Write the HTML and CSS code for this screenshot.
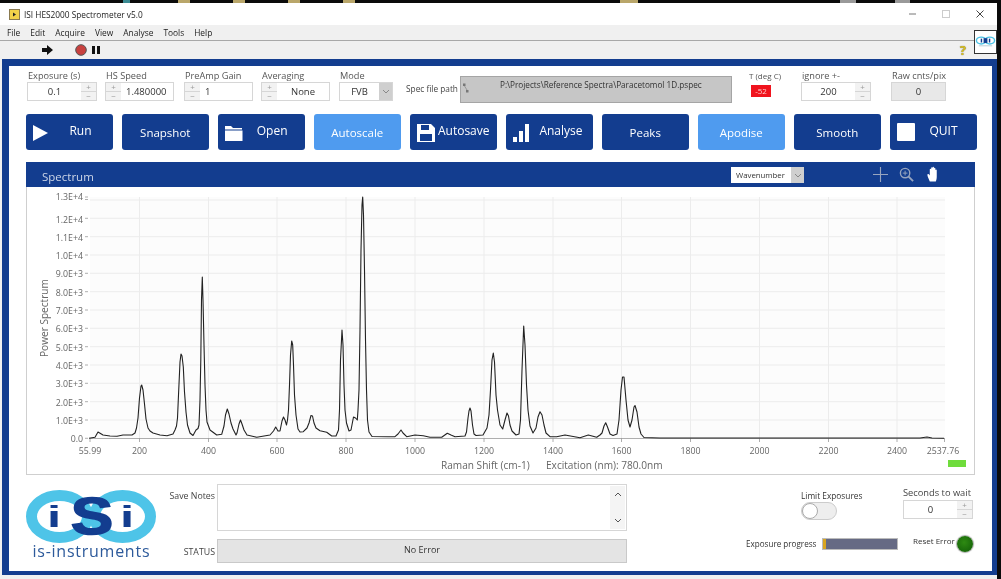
FILE: index.html
```html
<!DOCTYPE html>
<html lang="en">
<head>
<meta charset="utf-8">
<title>ISI HES2000 Spectrometer v5.0</title>
<link rel="stylesheet" href="styles.css">
</head>
<body>
<div class="desktop"></div>
<div class="window">
  <header class="titlebar">
    <svg class="appicon" viewBox="0 0 11 11"><rect x="0.5" y="0.5" width="10" height="10" fill="#f2d24a" stroke="#8a7a50"/><path d="M4 3.5 7 5.5 4 7.5Z" fill="#222"/></svg>
    <span class="apptitle">ISI HES2000 Spectrometer v5.0</span>
    <span class="winbtns">
      <svg viewBox="0 0 10 10"><path d="M2 5H9" stroke="#777"/></svg>
      <svg viewBox="0 0 10 10"><rect x="1.5" y="1.5" width="7" height="7" fill="none" stroke="#ccc"/></svg>
      <svg viewBox="0 0 10 10"><path d="M1.5 1.5 8.5 8.5M8.5 1.5 1.5 8.5" stroke="#444"/></svg>
    </span>
  </header>
  <div class="barwrap">
    <div class="bars">
      <nav class="menubar"><span>File</span><span>Edit</span><span>Acquire</span><span>View</span><span>Analyse</span><span>Tools</span><span>Help</span></nav>
      <div class="toolbar">
        <svg class="t-run" viewBox="0 0 12 10"><path d="M0 3H5V0L11 5 5 10V7H0Z" fill="#111"/></svg>
        <svg class="t-stop" viewBox="0 0 12 12"><circle cx="6" cy="6" r="5.3" fill="#c8413f" stroke="#555"/></svg>
        <svg class="t-pause" viewBox="0 0 8 8"><rect x="0" width="3" height="8" fill="#111"/><rect x="5" width="3" height="8" fill="#111"/></svg>
        <span class="help">?</span>
      </div>
    </div>
    <div class="tile">
      <svg viewBox="0 0 22 22"><ellipse cx="6.500" cy="9.500" rx="5" ry="3.600" fill="none" stroke="#4cc3e6" stroke-width="1.500"/><ellipse cx="15.500" cy="9.500" rx="5" ry="3.600" fill="none" stroke="#4cc3e6" stroke-width="1.500"/><rect x="6" y="7.500" width="1.500" height="4" fill="#133d8f"/><rect x="9" y="7" width="4" height="5" fill="#133d8f"/><rect x="14.500" y="7.500" width="1.500" height="4" fill="#133d8f"/><path d="M4 15H18" stroke="#8ab" stroke-width=".6"/></svg>
    </div>
  </div>

  <div class="frame">
    <main class="panel">
      <section class="controls">
        <div class="ctl c-exp"><label>Exposure (s)</label><div class="num"><span class="val">0.1</span><span class="spin"><i>+</i><i>−</i></span></div></div>
        <div class="ctl c-hs"><label>HS Speed</label><div class="num"><span class="spin"><i>+</i><i>−</i></span><span class="val left">1.480000</span></div></div>
        <div class="ctl c-pre"><label>PreAmp Gain</label><div class="num"><span class="spin"><i>+</i><i>−</i></span><span class="val left">1</span></div></div>
        <div class="ctl c-avg"><label>Averaging</label><div class="num"><span class="spin"><i>+</i><i>−</i></span><span class="val">None</span></div></div>
        <div class="ctl c-mode"><label>Mode</label><div class="num"><span class="val">FVB</span><span class="drop"><svg viewBox="0 0 8 5"><path d="M1 1 4 4 7 1" fill="none" stroke="#888"/></svg></span></div></div>
        <div class="path-lab">Spec file path</div>
        <div class="pathbox">
          <svg class="pathicon" viewBox="0 0 6 10"><rect x="0" y="0" width="2.500" height="2.500" fill="#777"/><rect x="3" y="6.500" width="2.500" height="2.500" fill="#777"/><path d="M1.500 2.500 4 6.500" stroke="#777" stroke-width=".6"/></svg>
          <span>P:\Projects\Reference Spectra\Paracetomol 1D.pspec</span>
        </div>
        <div class="temp"><label>T (deg C)</label><div class="redbox">-52</div></div>
        <div class="ctl c-ign"><label>ignore +-</label><div class="num"><span class="val">200</span><span class="spin"><i>+</i><i>−</i></span></div></div>
        <div class="ctl c-raw"><label>Raw cnts/pix</label><div class="num grey"><span class="val">0</span></div></div>
      </section>

      <section class="buttons">
        <button class="btn icon-l b-run"><svg class="ic" viewBox="0 0 15 16"><path d="M0 0 15 8 0 16Z" fill="#fff"/></svg><span>Run</span></button>
        <button class="btn"><span>Snapshot</span></button>
        <button class="btn icon-l b-open"><svg class="ic ic-open" viewBox="0 0 18 16"><path d="M0 1H6L8 3H17V4.500H0ZM0 5.500H17.500V16H0Z" fill="#fff"/></svg><span>Open</span></button>
        <button class="btn light"><span>Autoscale</span></button>
        <button class="btn icon-l b-save"><svg class="ic ic-big" viewBox="0 0 18 18"><path fill-rule="evenodd" d="M0 0H14L18 4V18H0ZM4 1V6H12V1ZM3 10V17H15V10Z" fill="#fff"/></svg><span>Autosave</span></button>
        <button class="btn icon-l b-ana"><svg class="ic ic-bars" viewBox="0 0 16 18"><rect x="0" y="13" width="4" height="5" fill="#fff"/><rect x="6" y="7" width="4" height="11" fill="#fff"/><rect x="12" y="0" width="4" height="18" fill="#fff"/></svg><span>Analyse</span></button>
        <button class="btn"><span>Peaks</span></button>
        <button class="btn light"><span>Apodise</span></button>
        <button class="btn"><span>Smooth</span></button>
        <button class="btn icon-l b-quit"><span class="quitbox"></span><span>QUIT</span></button>
      </section>

      <section class="chart">
        <div class="charthead">
          <span class="charttitle">Spectrum</span>
          <div class="select"><span>Wavenumber</span><span class="drop"><svg viewBox="0 0 8 5"><path d="M1 1 4 4 7 1" fill="none" stroke="#888"/></svg></span></div>
          <div class="tools">
            <svg class="tool-cross" viewBox="0 0 16 16"><path d="M8 0V16M0 8H16" stroke="#98a5bf" stroke-width="1.200"/></svg>
            <svg class="tool-zoom" viewBox="0 0 16 16"><circle cx="6.500" cy="6.500" r="5" fill="none" stroke="#98a5bf" stroke-width="1.500"/><path d="M10 10 15 15" stroke="#98a5bf" stroke-width="2"/><path d="M6.500 4V9M4 6.500H9" stroke="#98a5bf"/></svg>
            <svg class="tool-hand" viewBox="0 0 14 16"><path d="M3 16C2 13 0 10 .5 8.500 1 7.500 2 8 3 9.500V3C3 2 4.300 2 4.500 3V7 1.500C4.500.5 6 .5 6 1.500V7 1C6 0 7.500 0 7.500 1V7 2C7.500 1 9 1 9 2V7.500 4C9 3 10.500 3 10.500 4V11C10.500 13 10 15 9.500 16Z" fill="#fff"/></svg>
          </div>
        </div>
        <svg class="plot" viewBox="26 187 949 288" xmlns="http://www.w3.org/2000/svg">
          <rect x="90" y="197" width="855" height="241" fill="#fcfcfc"/>
          <g class="grid">
            <path d="M90 200H945M90 218.300H945M90 236.700H945M90 255H945M90 273.300H945M90 291.700H945M90 310H945M90 328.300H945M90 346.700H945M90 365H945M90 383.300H945M90 401.700H945M90 420H945"/>
            <path d="M139.500 197V438M208.500 197V438M277 197V438M346 197V438M415 197V438M484 197V438M553 197V438M621.500 197V438M690.500 197V438M759.500 197V438M828.500 197V438M897 197V438"/>
          </g>
          <g class="axis">
            <path d="M85 197H88M85 199.500H88M85 218.300H88M85 236.700H88M85 255H88M85 273.300H88M85 291.700H88M85 310H88M85 328.300H88M85 346.700H88M85 365H88M85 383.300H88M85 401.700H88M85 420H88M85 438.300H88"/>
            <path d="M90 438.500H945M90 438V442M139.500 438V442M208.500 438V442M277 438V442M346 438V442M415 438V442M484 438V442M553 438V442M621.500 438V442M690.500 438V442M759.500 438V442M828.500 438V442M897 438V442M944.500 438V442"/>
          </g>
          <polyline class="trace" points="89,438.300 95,437.300 98,432 103,435 110,436 117,436.300 123,435 132,435 135,433 136.500,428 138,418 139.500,398 141,386 141.700,385 143,390 144.500,404 146,419 148,428 150,431 153,433 160,435 167,435.700 173,434 175,430 176.500,426 177.500,418 178.500,395 180,362 181,354 182,356 183.300,367 184.500,392 186,412 187.500,425 190,433 193,435.500 196,430 198,428.500 199,425 200,400 200.800,360 201.500,300 202.300,277 203,300 204,345 205,385 206,410 207,422 210,430 216.700,435 221.700,434.300 224,426 225.500,415 227.300,409 229,414 231,423 233,429 236,435 237,433 239,424 240.500,420 242,424 244,430 247,435 256.700,437.300 270,435 273.500,431 275.700,427 278,431 280,431 282,421 283.500,417 285,420 286.500,425 287.500,420 288.500,410 289.500,385 290.500,355 291.700,341 292.700,345 293.500,365 294.500,395 296,415 298,429 300,432 303.300,431.700 307,428 309,423 311,415.500 312.500,416 314,423 316,428 320,430.700 326.700,432.300 331.700,436 336,436 338.500,430 339.500,410 340.500,360 342,330 343,345 344,385 345,410 346.500,423 349,431 351,430 353.500,417 355.500,418 357.300,420 358,410 359,390 360,330 361,250 362,205 362.700,197 363.500,215 364.500,270 365.500,340 366.500,390 367.500,420 369,432 372,436.500 388.300,436.700 395,436.700 398,434 401,430 403,433 406.700,436.700 415,435 423.300,435.700 430,437.300 441.700,437.300 447.300,433.300 451,435 455,436.700 465,436 466.500,432 468,418 469,411 470,408 471,411 472.500,425 474,434 476,435.500 483,435 487,428 489,415 490.500,390 492,360 493.300,353 494.500,362 496,395 497.500,410 500,425 502.700,429 505,420 507,413 508.500,416 510,425 512,431 516,435 519,434 520.500,420 522,370 523.700,326 525,345 526.500,385 528,410 530,426 533,433 536,428 538,417 540,411.700 542,415 544,425 546,433 550,436.700 556.700,436.700 565,435 580,437.700 588.300,435 596.700,437.300 600,435 602,433 604,426 605.700,422.700 607.500,427 610,434 613,435.500 617,434 619,420 621,390 622.500,377 624,377 626,400 628,420 630,427 632,420 634,407 635,405.500 637,412 639,427 641,434 644,437.500 660,438 700,438 800,438 920,438 927,437 932,438 944,438.300"/>
          <g class="ylab">
            <text x="83" y="200">1.3E+4</text><text x="83" y="222.500">1.2E+4</text><text x="83" y="240.800">1.1E+4</text><text x="83" y="259">1.0E+4</text><text x="83" y="277.300">9.0E+3</text><text x="83" y="295.700">8.0E+3</text><text x="83" y="314">7.0E+3</text><text x="83" y="332.300">6.0E+3</text><text x="83" y="350.700">5.0E+3</text><text x="83" y="369">4.0E+3</text><text x="83" y="387.300">3.0E+3</text><text x="83" y="405.700">2.0E+3</text><text x="83" y="424">1.0E+3</text><text x="83" y="442.300">0.0</text>
          </g>
          <g class="xlab">
            <text x="90" y="454">55.99</text><text x="139.500" y="454">200</text><text x="208.500" y="454">400</text><text x="277" y="454">600</text><text x="346" y="454">800</text><text x="415" y="454">1000</text><text x="484" y="454">1200</text><text x="553" y="454">1400</text><text x="621.500" y="454">1600</text><text x="690.500" y="454">1800</text><text x="759.500" y="454">2000</text><text x="828.500" y="454">2200</text><text x="897" y="454">2400</text><text x="943" y="454">2537.76</text>
          </g>
          <text class="axtitle" x="441" y="469">Raman Shift (cm-1)</text>
          <text class="axtitle" x="546" y="469">Excitation (nm): 780.0nm</text>
          <text class="axtitle" transform="rotate(-90 48 357)" x="48" y="357">Power Spectrum</text>
          <rect x="948" y="460" width="18" height="7" fill="#6fdc3c"/>
        </svg>
      </section>

      <section class="bottom">
        <svg class="logo" viewBox="0 0 130 72">
          <ellipse cx="33.500" cy="27.500" rx="28" ry="21" fill="none" stroke="#4ec4e8" stroke-width="11"/>
          <ellipse cx="96.500" cy="27.500" rx="28" ry="21" fill="none" stroke="#4ec4e8" stroke-width="11"/>
          <text class="logo-big" transform="translate(66 45) scale(1.250 1)">S</text>
          <text class="logo-i" transform="translate(28 38) scale(1.700 1)">i</text>
          <text class="logo-i" transform="translate(101 38) scale(1.700 1)">i</text>
          <text class="logo-name" x="65" y="68" textLength="117" lengthAdjust="spacing">is-instruments</text>
        </svg>
        <div class="notes">
          <div class="notes-row"><label class="side">Save Notes</label><div class="notebox"><span class="scroll"><svg viewBox="0 0 8 5"><path d="M1 4 4 1 7 4" fill="none" stroke="#555"/></svg><svg viewBox="0 0 8 5"><path d="M1 1 4 4 7 1" fill="none" stroke="#555"/></svg></span></div></div>
          <div class="status-row"><label class="side">STATUS</label><div class="statusbox">No Error</div></div>
        </div>
        <div class="right">
          <div class="right-top">
            <div class="limit"><span>Limit Exposures</span><div class="switch"><i></i></div></div>
            <div class="wait"><label>Seconds to wait</label><div class="num"><span class="val">0</span><span class="spin"><i>+</i><i>−</i></span></div></div>
          </div>
          <div class="right-low">
            <span class="prog-lab">Exposure progress</span>
            <div class="progress"><i></i></div>
            <span class="reset">Reset Error</span>
            <span class="led"></span>
          </div>
        </div>
      </section>
    </main>
  </div>
</div>
</body>
</html>
```
FILE: styles.css
```css
* { box-sizing: border-box; }
html, body { margin: 0; height: 100%; background: #0b0b0b; }
body { width: 1001px; height: 579px; overflow: hidden; font-family: "Open Sans", "Noto Sans", sans-serif; color: #333; }
.desktop { height: 3px; background: linear-gradient(90deg, #0b0b0b 0 123px, #3a8a92 123px 130px, #0b0b0b 130px 178px, #b9a66a 178px 190px, #0b0b0b 190px 233px, #b9a66a 233px 245px, #0b0b0b 245px 288px, #b9a66a 288px 300px, #0b0b0b 300px 343px, #b9a66a 343px 355px, #0b0b0b 355px 620px, #b9a66a 620px 638px, #0b0b0b 638px 840px, #999 840px 856px, #0b0b0b 856px 895px, #999 895px 910px, #0b0b0b 910px); }
.window { width: 997px; height: 576px; background: #f0f0f0; display: flex; flex-direction: column; filter: blur(.3px); }
.titlebar { height: 22px; background: #fff; display: flex; align-items: center; padding-left: 9px; flex: none; }
.appicon { width: 11px; height: 11px; }
.apptitle { font-size: 8.300px; margin-left: 4px; color: #222; }
.winbtns { margin-left: auto; display: flex; gap: 24px; padding-right: 12px; }
.winbtns svg { width: 10px; height: 10px; }
.barwrap { display: flex; height: 34px; flex: none; background: #f0f0f0; }
.bars { flex: 1; min-width: 0; }
.menubar { height: 16px; display: flex; gap: 10px; padding-left: 7px; align-items: center; font-size: 8.400px; color: #222; border-bottom: 1px solid #a8a8a8; }
.toolbar { height: 18px; display: flex; align-items: center; }
.t-run { width: 12px; height: 10px; margin-left: 42px; }
.t-stop { width: 12px; height: 12px; margin-left: 21px; }
.t-pause { width: 8px; height: 8px; margin-left: 5px; }
.help { margin-left: auto; margin-right: 8px; font-weight: 700; font-size: 13px; color: #d8c020; line-height: 1; text-shadow: 0 0 1px #444; }
.tile { width: 23px; height: 24px; margin-top: 5px; background: #fff; border: 1px solid #333; flex: none; }
.tile svg { width: 100%; height: 100%; display: block; }
.frame { flex: none; height: 516px; background: #133d8f; padding: 7px 5px 4px 7px; margin-left: 2px; width: 995px; }
.panel { width: 983px; height: 505px; background: #fff; padding: 4px 16px 0 17px; display: flex; flex-direction: column; }
.controls { height: 39px; display: flex; align-items: flex-start; flex: none; }
.ctl { display: flex; flex-direction: column; }
.ctl label, .temp label { font-size: 9.200px; color: #555; line-height: 12px; padding-left: 1px; white-space: nowrap; }
.num { height: 19px; border: 1px solid #d6d6d6; display: flex; align-items: stretch; font-size: 9.500px; color: #333; background: #fff; }
.num .val { flex: 1; display: flex; align-items: center; justify-content: center; }
.num .val.left { justify-content: flex-start; padding-left: 5px; }
.spin { width: 15px; display: flex; flex-direction: column; background: #f2f2f2; flex: none; }
.spin i { flex: 1; font-style: normal; font-size: 8px; line-height: 8px; color: #999; border: 0 solid #d6d6d6; display: flex; align-items: center; justify-content: center; }
.spin i:first-child { border-bottom-width: 1px; }
.c-exp { width: 70px; margin-left: 1px; }
.c-hs { width: 69px; margin-left: 8px; }
.c-pre { width: 69px; margin-left: 10px; }
.c-avg { width: 69px; margin-left: 8px; }
.c-mode { width: 54px; margin-left: 9px; }
.drop { width: 13px; flex: none; background: #cfcfcf; display: flex; align-items: center; justify-content: center; }
.drop svg { width: 8px; height: 5px; }
.path-lab { font-size: 8.300px; color: #444; margin: 13px 0 0 13px; width: 54px; white-space: nowrap; }
.pathbox { width: 272px; height: 27px; margin-top: 6px; background: #c6c6c6; border: 1px solid #a5a5a5; display: flex; font-size: 8.200px; color: #333; padding: 2px 0 0 2px; }
.pathicon { width: 6px; height: 11px; margin-top: 4px; flex: none; }
.pathbox span { margin-left: 31px; white-space: nowrap; }
.temp { margin-left: 17px; width: 42px; }
.temp label { font-size: 8px; display: block; padding: 0; }
.redbox { width: 20px; height: 12px; margin: 3px 0 0 2px; background: #f0141e; color: #fcc; font-size: 8px; line-height: 12px; text-align: center; }
.c-ign { width: 70px; margin-left: 10px; }
.c-raw { width: 55px; margin-left: 20px; }
.num.grey { background: #e8e8e8; }
.buttons { height: 36px; margin-top: 5px; flex: none; display: grid; grid-template-columns: repeat(10, 86.500px); column-gap: 9.500px; }
.btn { border: 0; border-radius: 3px; background: #133d8f; color: #fff; font: 500 11.500px "Open Sans", "Noto Sans", sans-serif; display: flex; align-items: center; justify-content: center; padding: 0; position: relative; }
.btn.light { background: #4f9bef; }
.btn.icon-l { justify-content: flex-start; padding-left: 7px; }
.btn.icon-l span:last-child { position: absolute; top: 8px; font-size: 12px; }
.b-run span:last-child { right: 21px; }
.b-open span:last-child { right: 17px; }
.b-save span:last-child { right: 7px; }
.b-ana span:last-child { right: 10px; }
.b-quit span:last-child { right: 19px; }
.ic { width: 15px; height: 16px; margin-top: 2px; flex: none; }
.ic-open { width: 18px; }
.ic-big { width: 18px; height: 18px; }
.ic-bars { width: 16px; height: 18px; }
.quitbox { width: 18px; height: 18px; background: #fff; border-radius: 1px; }
.chart { margin-top: 12px; height: 313px; width: 949px; border: 1px solid #cfcfcf; border-top: 0; flex: none; display: flex; flex-direction: column; }
.charthead { height: 25px; margin: 0 -1px; background: #133d8f; position: relative; display: flex; align-items: center; flex: none; }
.charttitle { font-size: 11.500px; margin-left: 16px; margin-top: 3px; color: #cdd6e8; }
.select { position: absolute; left: 705px; top: 5px; width: 73px; height: 16px; background: #fff; display: flex; font-size: 7.800px; color: #333; align-items: center; padding-left: 5px; justify-content: space-between; }
.select .drop { height: 100%; }
.tools { position: absolute; left: 847px; top: 4px; display: flex; align-items: center; gap: 11px; }
.tool-cross, .tool-zoom { width: 15px; height: 15px; }
.tool-hand { width: 13px; height: 16px; margin-left: 2px; }
.plot { width: 949px; height: 288px; display: block; margin-left: -1px; flex: none; }
.grid path { stroke: #ececec; stroke-width: 1; fill: none; }
.axis path { stroke: #999; stroke-width: .8; fill: none; }
.trace { fill: none; stroke: #222; stroke-width: 1.100; stroke-linejoin: round; }
.ylab text { font-size: 8.800px; text-anchor: end; fill: #666; }
.xlab text { font-size: 8.800px; text-anchor: middle; fill: #666; }
.axtitle { font-size: 10.100px; fill: #666; }
.bottom { flex: 1; display: flex; align-items: flex-start; min-height: 0; }
.logo { width: 130px; height: 72px; margin-top: 14px; flex: none; }
.logo-big { font: 700 51px "Liberation Sans", sans-serif; fill: #133d8f; text-anchor: middle; stroke: #133d8f; stroke-width: 1.500px; }
.logo-i { font: 700 30px "Liberation Sans", sans-serif; fill: #133d8f; text-anchor: middle; }
.logo-name { font: 400 16px "Open Sans", sans-serif; fill: #2d5a9b; text-anchor: middle; }
.notes { width: 470px; margin-left: 1px; padding-top: 9px; flex: none; }
.notes-row, .status-row { display: flex; align-items: flex-start; }
.side { width: 60px; text-align: right; padding-right: 2px; font-size: 8.800px; color: #444; flex: none; }
.notes-row .side { padding-top: 6px; }
.notebox { width: 410px; height: 47px; border: 1px solid #d6d6d6; background: #fff; display: flex; justify-content: flex-end; }
.scroll { width: 15px; background: #f4f4f4; display: flex; flex-direction: column; justify-content: space-between; align-items: center; padding: 6px 0; margin: 1px; }
.scroll svg { width: 8px; height: 5px; }
.status-row { margin-top: 8px; }
.status-row .side { padding-top: 7px; }
.statusbox { width: 410px; height: 24px; background: #e4e4e4; border: 1px solid #c9c9c9; text-align: center; font-size: 9px; line-height: 20px; color: #333; }
.right { flex: 1; padding-top: 14px; min-width: 0; }
.right-top { display: flex; align-items: flex-start; }
.limit { margin-left: 174px; width: 102px; font-size: 8.300px; color: #333; padding-top: 1px; }
.limit span { display: block; }
.switch { width: 36px; height: 18px; margin-top: 1px; border: 1px solid #ccc; border-radius: 9px; background: #eee; }
.switch i { display: block; width: 16px; height: 16px; border-radius: 50%; background: #fff; border: 1px solid #aaa; }
.wait { width: 70px; }
.wait label { font-size: 9.300px; color: #444; line-height: 13px; display: block; white-space: nowrap; margin-top: -3px; }
.wait .num { margin-top: 1px; }
.right-low { display: flex; align-items: center; margin-top: 15px; }
.prog-lab { margin-left: 119px; width: 76px; font-size: 8.100px; color: #333; white-space: nowrap; }
.progress { width: 76px; height: 12px; background: #666a84; border: 1px solid #bbb; }
.progress i { display: block; width: 3px; height: 100%; background: #d9a520; }
.reset { margin-left: 15px; margin-bottom: 6px; width: 44px; font-size: 8px; color: #333; white-space: nowrap; }
.led { width: 16px; height: 16px; border-radius: 50%; background: radial-gradient(circle at 45% 40%, #2e8a12, #0f5a06); box-shadow: 0 0 1px 1px #aaa; }
```
